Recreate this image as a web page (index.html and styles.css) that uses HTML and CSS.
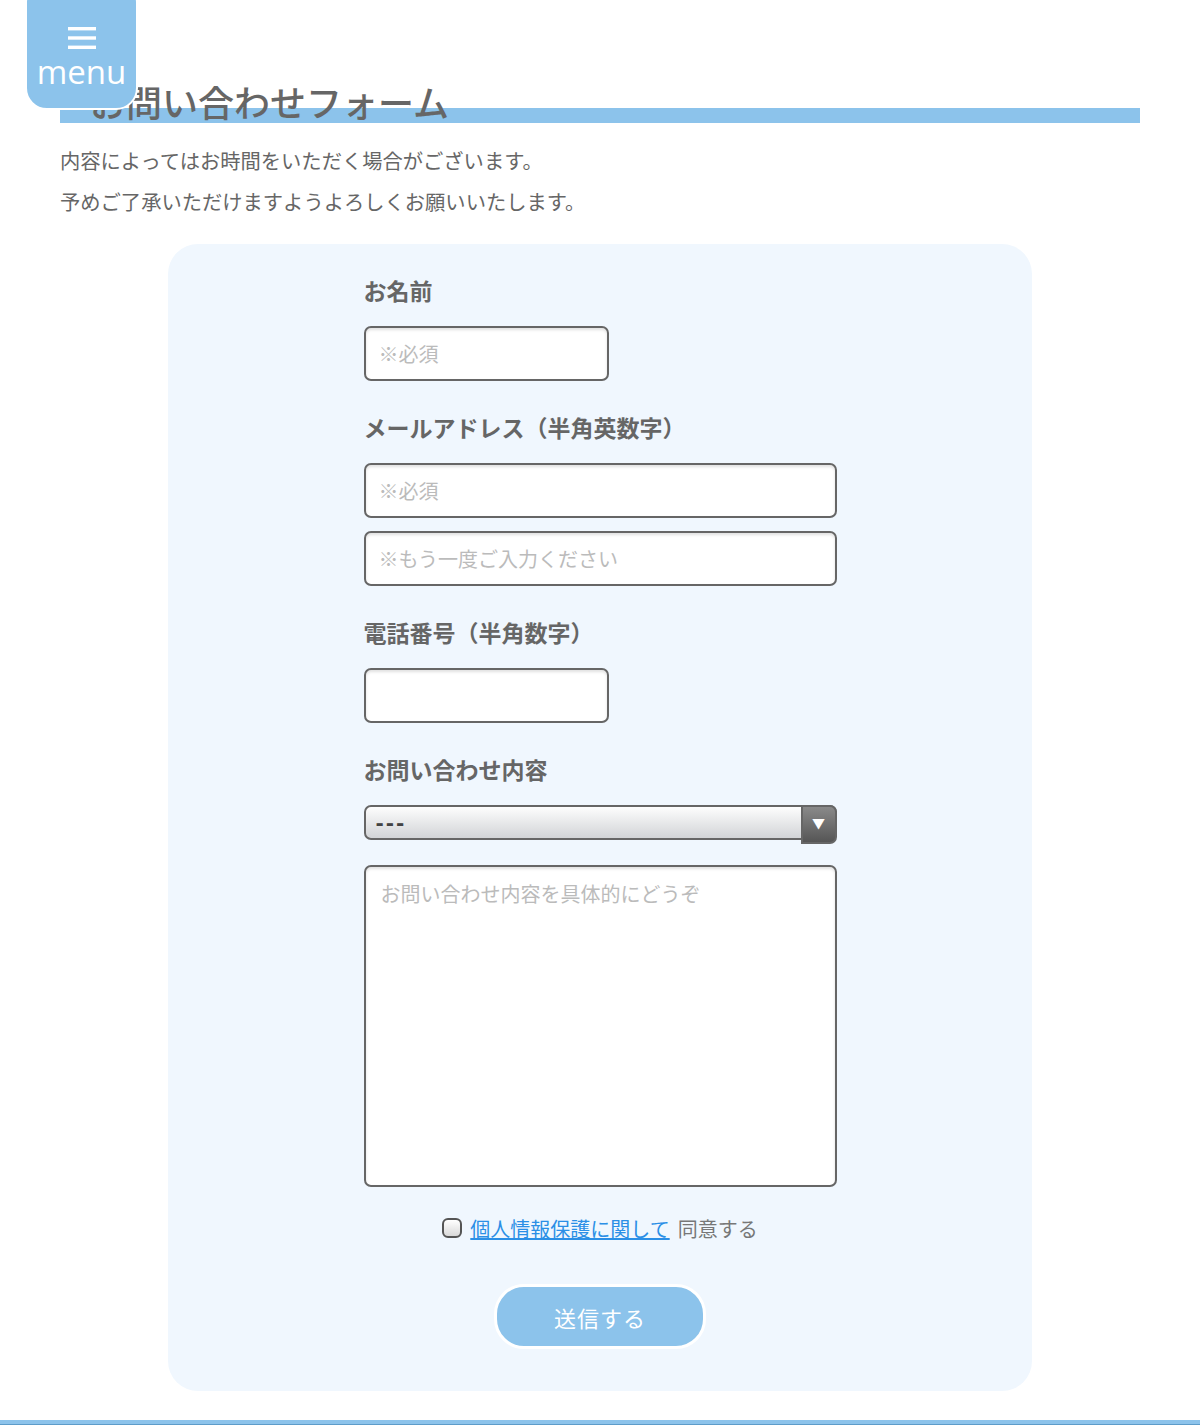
FILE: index.html
```html
<!DOCTYPE html>
<html lang="ja">
<head>
    <meta charset="UTF-8">
    <meta name="viewport" content="width=device-width, initial-scale=1.0">
    <title>お問い合わせフォーム</title>
    <link rel="stylesheet" href="styles.css">
</head>
<body>

<div class="menu-btn">
    <svg class="menu-icon" width="30" height="24" viewBox="0 0 30 24">
        <rect x="1" y="1" width="28" height="3.4" fill="#fff"/>
        <rect x="1" y="10.3" width="28" height="3.4" fill="#fff"/>
        <rect x="1" y="19.6" width="28" height="3.4" fill="#fff"/>
    </svg>
    <span class="menu-text">menu</span>
</div>

<h1 class="page-title">お問い合わせフォーム</h1>

<div class="lead">
    <p>内容によってはお時間をいただく場合がございます。</p>
    <p>予めご了承いただけますようよろしくお願いいたします。</p>
</div>

<div class="form-box">
    <form class="contact-form">
        <div class="field">
            <label class="field-label">お名前</label>
            <input type="text" class="input input--short" placeholder="※必須">
        </div>

        <div class="field">
            <label class="field-label">メールアドレス（半角英数字）</label>
            <input type="text" class="input" placeholder="※必須">
            <input type="text" class="input input--second" placeholder="※もう一度ご入力ください">
        </div>

        <div class="field">
            <label class="field-label">電話番号（半角数字）</label>
            <input type="text" class="input input--short">
        </div>

        <div class="field field--last">
            <label class="field-label">お問い合わせ内容</label>
            <div class="select-wrap">
                <select class="select">
                    <option>---</option>
                </select>
            </div>
            <textarea class="textarea" placeholder="お問い合わせ内容を具体的にどうぞ"></textarea>
        </div>

        <div class="agree">
            <input type="checkbox" class="check" id="agree">
            <a href="#" class="agree-link">個人情報保護に関して</a>
            <span class="agree-text">同意する</span>
        </div>

        <div class="submit-row">
            <button type="button" class="submit-btn">送信する</button>
        </div>
    </form>
</div>

<div class="footer-bar"></div>

</body>
</html>
```

FILE: styles.css
```css
* {
    margin: 0;
    padding: 0;
    box-sizing: border-box;
}

body {
    background: #fff;
    font-family: "Noto Sans CJK JP", "Noto Sans", sans-serif;
    color: #666;
}

.menu-btn {
    position: fixed;
    top: -20px;
    left: 25px;
    width: 113px;
    height: 130px;
    padding-top: 44px;
    background-color: #8cc3eb;
    border: 2px solid #fff;
    border-radius: 22px;
    display: flex;
    flex-direction: column;
    align-items: center;
    z-index: 10;
}

.menu-icon {
    display: block;
}

.menu-text {
    font-family: "Open Sans", sans-serif;
    font-size: 33px;
    line-height: 33px;
    color: #fff;
    margin-top: 5px;
}

.page-title {
    margin: 0 60px;
    padding: 80px 0 0 30px;
    font-size: 36px;
    line-height: 43px;
    font-weight: 500;
    color: #666;
    background: linear-gradient(to bottom, transparent calc(100% - 15px), #8cc3eb calc(100% - 15px));
}

.lead {
    margin: 17px 60px 22px;
    font-size: 20.3px;
    line-height: 41px;
    color: #666;
}

.form-box {
    width: 864px;
    margin: 0 auto;
    padding: 30px 0 42px;
    background-color: #f0f7fe;
    border-radius: 30px;
}

.contact-form {
    width: 473px;
    margin: 0 auto;
}

.field {
    display: flex;
    flex-direction: column;
    margin-bottom: 30px;
}

.field--last {
    margin-bottom: 26px;
}

.field-label {
    font-size: 23px;
    line-height: 32px;
    font-weight: bold;
    color: #666;
    margin-bottom: 20px;
}

.input {
    width: 100%;
    height: 55px;
    padding: 0 13px;
    font-size: 20px;
    font-family: inherit;
    color: #444;
    background: #fff;
    border: 2px solid #666;
    border-radius: 7px;
    box-shadow: inset 0 2px 3px rgba(0, 0, 0, 0.12);
}

.input::placeholder,
.textarea::placeholder {
    color: #bbb;
}

.input--short {
    width: 245px;
}

.input--second {
    margin-top: 13px;
}

.select-wrap {
    position: relative;
    height: 35px;
    margin-bottom: 25px;
}

.select {
    -webkit-appearance: none;
    appearance: none;
    width: 100%;
    height: 35px;
    padding: 0 10px;
    font-size: 20px;
    letter-spacing: 2px;
    font-family: "DejaVu Sans", sans-serif;
    font-weight: bold;
    color: #444;
    background: linear-gradient(to bottom, #fdfdfd, #d2d4d7);
    border: 2px solid #666;
    border-radius: 7px;
}

.select-wrap::after {
    content: "▼";
    position: absolute;
    top: 0;
    right: 0;
    width: 32px;
    height: 35px;
    font-size: 13px;
    line-height: 31px;
    text-align: center;
    color: #fff;
    background: linear-gradient(to bottom, #8a8a8a, #555);
    border: 2px solid #666;
    border-radius: 0 7px 7px 0;
    pointer-events: none;
}

.textarea {
    width: 100%;
    height: 322px;
    padding: 12px 15px;
    font-size: 20px;
    line-height: 30px;
    font-family: inherit;
    resize: none;
    background: #fff;
    border: 2px solid #666;
    border-radius: 7px;
    box-shadow: inset 0 2px 3px rgba(0, 0, 0, 0.12);
}

.agree {
    display: flex;
    justify-content: center;
    align-items: center;
    height: 30px;
    font-size: 20px;
}

.check {
    -webkit-appearance: none;
    appearance: none;
    width: 20px;
    height: 20px;
    margin-right: 8px;
    border: 2px solid #555;
    border-radius: 6px;
    background: linear-gradient(to bottom, #fff, #d9d9d9);
}

.agree-link {
    color: #2b8fe6;
    text-decoration: underline;
    margin-right: 8px;
}

.agree-text {
    color: #777;
}

.submit-row {
    display: flex;
    justify-content: center;
    margin-top: 41px;
}

.submit-btn {
    width: 212px;
    height: 65px;
    font-size: 22px;
    font-family: inherit;
    letter-spacing: 1px;
    color: #fff;
    background-color: #8cc3eb;
    border: 3px solid #fff;
    border-radius: 30px;
    cursor: pointer;
}

.footer-bar {
    margin-top: 29px;
    height: 5px;
    background-color: #8cc3eb;
    border-bottom: 1px solid #5d9cc9;
}
```
